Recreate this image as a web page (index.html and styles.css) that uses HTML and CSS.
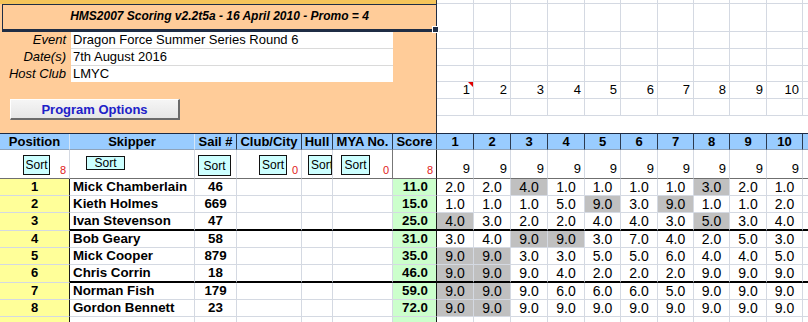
FILE: index.html
```html
<!DOCTYPE html>
<html lang="en">
<head>
  <meta charset="UTF-8">
  <title>HMS2007 Scoring</title>
  <link rel="stylesheet" href="styles.css">
</head>
<body>
  <div class="sheet">

    <!-- Event details panel with the empty grid to its right -->
    <div class="top">
      <div class="panel">
        <div class="strip"></div>
        <div class="title">HMS2007 Scoring v2.2t5a - 16 April 2010 - Promo = 4</div>
        <div class="info-row"><span class="label">Event</span><span class="field">Dragon Force Summer Series Round 6</span></div>
        <div class="info-row"><span class="label">Date(s)</span><span class="field">7th August 2016</span></div>
        <div class="info-row last"><span class="label">Host Club</span><span class="field">LMYC</span></div>
        <div></div>
        <div class="actions"><button class="options-btn">Program Options</button></div>
      </div>

      <span></span><span></span><span></span><span></span><span></span><span></span><span></span><span></span><span></span><span></span><span></span>
      <span></span><span></span><span></span><span></span><span></span><span></span><span></span><span></span><span></span><span></span><span></span>
      <span></span><span></span><span></span><span></span><span></span><span></span><span></span><span></span><span></span><span></span><span></span>
      <span></span><span></span><span></span><span></span><span></span><span></span><span></span><span></span><span></span><span></span><span></span>
      <span></span><span></span><span></span><span></span><span></span><span></span><span></span><span></span><span></span><span></span><span></span>
      <span class="num note">1</span><span class="num">2</span><span class="num">3</span><span class="num">4</span><span class="num">5</span><span class="num">6</span><span class="num">7</span><span class="num">8</span><span class="num">9</span><span class="num">10</span><span></span>
      <span></span><span></span><span></span><span></span><span></span><span></span><span></span><span></span><span></span><span></span><span></span>
    </div>

    <!-- Column headings -->
    <div class="row head">
      <div class="soft">Position</div>
      <div class="soft">Skipper</div>
      <div>Sail #</div>
      <div>Club/City</div>
      <div>Hull</div>
      <div>MYA No.</div>
      <div class="score">Score</div>
      <div>1</div><div>2</div><div>3</div><div>4</div><div>5</div>
      <div>6</div><div>7</div><div>8</div><div>9</div><div>10</div>
      <div></div>
    </div>

    <!-- Sort buttons and counts -->
    <div class="row sorts">
      <div><button class="sort sort-pos">Sort</button><span class="count">8</span></div>
      <div><button class="sort sort-name">Sort</button></div>
      <div><button class="sort sort-sail">Sort</button></div>
      <div><button class="sort sort-club">Sort</button><span class="count">0</span></div>
      <div><button class="sort sort-hull">Sort</button></div>
      <div class="mya"><button class="sort sort-mya">Sort</button><span class="count">0</span></div>
      <div class="score"><span class="count">8</span></div>
      <div class="races">9</div><div class="races">9</div><div class="races">9</div><div class="races">9</div><div class="races">9</div>
      <div class="races">9</div><div class="races">9</div><div class="races">9</div><div class="races">9</div><div class="races">9</div>
      <div></div>
    </div>

    <!-- Results -->
    <div class="row">
      <div class="pos">1</div><div class="name">Mick Chamberlain</div><div class="sail">46</div><div></div><div></div><div></div><div class="total">11.0</div>
      <div>2.0</div><div>2.0</div><div class="drop">4.0</div><div>1.0</div><div>1.0</div><div>1.0</div><div>1.0</div><div class="drop">3.0</div><div>2.0</div><div>1.0</div><div></div>
    </div>
    <div class="row">
      <div class="pos">2</div><div class="name">Kieth Holmes</div><div class="sail">669</div><div></div><div></div><div></div><div class="total">15.0</div>
      <div>1.0</div><div>1.0</div><div>1.0</div><div>5.0</div><div class="drop">9.0</div><div>3.0</div><div class="drop">9.0</div><div>1.0</div><div>1.0</div><div>2.0</div><div></div>
    </div>
    <div class="row end">
      <div class="pos">3</div><div class="name">Ivan Stevenson</div><div class="sail">47</div><div></div><div></div><div></div><div class="total">25.0</div>
      <div class="drop">4.0</div><div>3.0</div><div>2.0</div><div>2.0</div><div>4.0</div><div>4.0</div><div>3.0</div><div class="drop">5.0</div><div>3.0</div><div>4.0</div><div></div>
    </div>
    <div class="row">
      <div class="pos">4</div><div class="name">Bob Geary</div><div class="sail">58</div><div></div><div></div><div></div><div class="total">31.0</div>
      <div>3.0</div><div>4.0</div><div class="drop">9.0</div><div class="drop">9.0</div><div>3.0</div><div>7.0</div><div>4.0</div><div>2.0</div><div>5.0</div><div>3.0</div><div></div>
    </div>
    <div class="row">
      <div class="pos">5</div><div class="name">Mick Cooper</div><div class="sail">879</div><div></div><div></div><div></div><div class="total">35.0</div>
      <div class="drop">9.0</div><div class="drop">9.0</div><div>3.0</div><div>3.0</div><div>5.0</div><div>5.0</div><div>6.0</div><div>4.0</div><div>4.0</div><div>5.0</div><div></div>
    </div>
    <div class="row end">
      <div class="pos">6</div><div class="name">Chris Corrin</div><div class="sail">18</div><div></div><div></div><div></div><div class="total">46.0</div>
      <div class="drop">9.0</div><div class="drop">9.0</div><div>9.0</div><div>4.0</div><div>2.0</div><div>2.0</div><div>2.0</div><div>9.0</div><div>9.0</div><div>9.0</div><div></div>
    </div>
    <div class="row">
      <div class="pos">7</div><div class="name">Norman Fish</div><div class="sail">179</div><div></div><div></div><div></div><div class="total">59.0</div>
      <div class="drop">9.0</div><div class="drop">9.0</div><div>9.0</div><div>6.0</div><div>6.0</div><div>6.0</div><div>5.0</div><div>9.0</div><div>9.0</div><div>9.0</div><div></div>
    </div>
    <div class="row">
      <div class="pos">8</div><div class="name">Gordon Bennett</div><div class="sail">23</div><div></div><div></div><div></div><div class="total">72.0</div>
      <div class="drop">9.0</div><div class="drop">9.0</div><div>9.0</div><div>9.0</div><div>9.0</div><div>9.0</div><div>9.0</div><div>9.0</div><div>9.0</div><div>9.0</div><div></div>
    </div>
    <div class="row">
      <div class="pos"></div><div class="name"></div><div></div><div></div><div></div><div></div><div class="total"></div>
      <div></div><div></div><div></div><div></div><div></div><div></div><div></div><div></div><div></div><div></div><div></div>
    </div>

  </div>
</body>
</html>
```

FILE: styles.css
```css
/* Spreadsheet look, Excel 2007 colours */
body {
  margin: 0;
  font-family: "Liberation Sans", Arial, sans-serif;
  font-size: 13px;
  color: #000;
  background: #fff;
  overflow: hidden;
}

.sheet {
  --cols: 70px 125px 42px 65px 31px 60px 44px 37px 37px 37px 37px 36px 37px 36px 36px 37px 36px 60px;
  --grid: #d4d9e2;
  width: 808px;
  height: 322px;
  overflow: hidden;
}

/* Top block: orange panel plus blank cells */
.top {
  display: grid;
  grid-template-columns: var(--cols);
  grid-template-rows: 4px 28px 17px 17px 16px 17px 17px 17px;
}

.top > span {
  box-sizing: border-box;
  border-right: 1px solid var(--grid);
  border-bottom: 1px solid var(--grid);
}

.top .num {
  text-align: right;
  padding-right: 3px;
  line-height: 16px;
  font-size: 13px;
}

.top .note {
  position: relative;
}

/* little red comment marker */
.top .note::after {
  content: "";
  position: absolute;
  top: 0;
  right: 0;
  border-top: 5px solid #e00000;
  border-left: 5px solid transparent;
}

.panel {
  grid-column: 1 / 8;
  grid-row: 1 / 9;
  box-sizing: border-box;
  background: #ffcc99;
  border-right: 1px solid #2a2f3a;
  display: grid;
  grid-template-rows: 4px 28px 17px 17px 16px 17px 34px;
}

.strip {
  background: #f5c45a;
}

.title {
  position: relative;
  box-sizing: border-box;
  margin-left: 2px;
  margin-right: -1px;
  border: 1px solid #1f2d45;
  border-bottom: 3px solid #1f2d45;
  text-align: center;
  font-size: 12px;
  font-weight: bold;
  font-style: italic;
  line-height: 23px;
}

/* fill handle of the selected cell */
.title::after {
  content: "";
  position: absolute;
  right: -3px;
  bottom: -4px;
  width: 5px;
  height: 5px;
  background: #1f2d45;
  border: 1px solid #fff;
}

.info-row {
  display: grid;
  grid-template-columns: 71px 322px 1fr;
}

.info-row .label {
  text-align: right;
  padding-right: 5px;
  font-style: italic;
  line-height: 16px;
}

.info-row .field {
  background: #fff;
  padding-left: 2px;
  line-height: 16px;
  border-bottom: 1px solid #dadada;
}

.info-row.last .field {
  border-bottom: none;
  line-height: 15px;
}

.actions {
  padding-left: 10px;
}

.options-btn {
  box-sizing: border-box;
  width: 170px;
  height: 21px;
  padding: 0;
  background: linear-gradient(#f5f5f5, #e6e6e6);
  border: 1px solid #fff;
  border-right: 2px solid #6b6b6b;
  border-bottom: 2px solid #6b6b6b;
  font-family: inherit;
  font-size: 13px;
  font-weight: bold;
  color: #2020c8;
}

/* Sheet rows */
.row {
  display: grid;
  grid-template-columns: var(--cols);
  height: 17px;
}

.row > div {
  box-sizing: border-box;
  border-right: 1px solid var(--grid);
  border-bottom: 1px solid var(--grid);
  white-space: nowrap;
  overflow: hidden;
  text-align: center;
  line-height: 16px;
  font-size: 14px;
}

.row > div:nth-child(1) {
  border-right-color: #1a1a1a;
}

.row > div:nth-child(7) {
  border-right-color: #1a1a1a;
}

.head {
  box-sizing: border-box;
  border-top: 1px solid #1b2a44;
  background: #99ccff;
  font-weight: bold;
}

.row.head > div {
  border-right-color: #2b3a50;
  border-bottom-color: #8fa3ba;
  line-height: 16px;
  font-size: 13px;
}

.row.head > div.soft {
  border-right-color: #d6e6f7;
}

.sorts {
  height: 29px;
}

.row.sorts > div {
  display: flex;
  align-items: flex-start;
  border-bottom-color: #6f6f6f;
  font-size: 13px;
}

.row.sorts > div:nth-child(1) {
  border-right-color: var(--grid);
}

.row.sorts > div.mya {
  border-right-color: #777;
}

.sort {
  box-sizing: border-box;
  height: 20px;
  margin-top: 5px;
  padding: 0;
  background: #ccffff;
  border: 1px solid #111;
  font-family: inherit;
  font-size: 12px;
  color: #000;
  overflow: hidden;
  white-space: nowrap;
}

.sort-pos { width: 27px; margin-left: 23px; }
.sort-name { width: 39px; height: 14px; margin-top: 6px; margin-left: 16px; line-height: 11px; }
.sort-sail { width: 33px; height: 21px; margin-left: 3px; }
.sort-club { width: 28px; margin-left: 22px; }
.sort-hull { width: 25px; margin-left: 6px; text-align: left; padding-left: 2px; }
.sort-mya { width: 29px; margin-left: 8px; }

.count {
  margin-left: auto;
  align-self: flex-end;
  padding-right: 3px;
  padding-bottom: 1px;
  font-size: 11px;
  line-height: 13px;
  color: #e02020;
}

.row.sorts > .races {
  display: block;
  text-align: right;
  padding-right: 3px;
  padding-top: 11px;
}

/* Result rows */
.row > .pos {
  background: #ffff99;
  font-weight: bold;
  font-size: 13px;
}

.row > .name {
  text-align: left;
  padding-left: 3px;
  font-weight: bold;
  font-size: 10pt;
}

.row > .sail {
  font-weight: bold;
  font-size: 10pt;
}

.row > .total {
  background: #ccffcc;
  font-weight: bold;
  font-size: 10pt;
  text-align: right;
  padding-right: 8px;
}

.drop {
  background: #c0c0c0;
}

/* heavy rule after each group of three */
.row.end {
  height: 18px;
}

.row.end > div:not(:first-child) {
  border-bottom: 2px solid #000;
}
```
